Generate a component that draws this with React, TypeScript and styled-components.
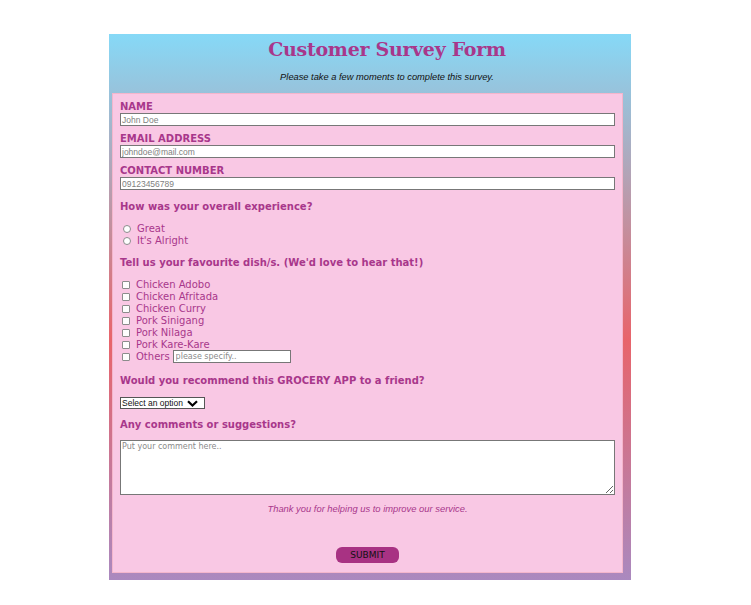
import React from "react";
import styled, { createGlobalStyle } from "styled-components";

const Global = createGlobalStyle`
  body { margin: 0; background: #ffffff; font-family: "DejaVu Sans", Verdana, sans-serif; }
  * { box-sizing: border-box; }
`;

const purple = "#a8378b";

const Outer = styled.div`
  margin: 34px 0 0 109px;
  width: 522px;
  padding: 3px 8px 7px 3px;
  background: linear-gradient(180deg, #86d9f7 0%, #9ac0d8 12%, #e8646b 56%, #aa89bf 100%);
`;

const Header = styled.header`
  padding-left: 39px;
  text-align: center;
`;

const Title = styled.h1`
  margin: 0;
  font-family: "DejaVu Serif", Georgia, serif;
  font-weight: bold;
  font-size: 19px;
  letter-spacing: -0.3px;
  line-height: 24px;
  color: ${purple};
`;

const Subtitle = styled.p`
  margin: 11px 0 10px;
  font-family: "Liberation Sans", Arial, sans-serif;
  font-style: italic;
  font-size: 9.3px;
  line-height: 11px;
  color: #111;
`;

const Panel = styled.form`
  background: #f9c8e4;
  border: 1px solid #f4b6cc;
  padding: 7px 7px 9px 7px;
  display: flex;
  flex-direction: column;
`;

const Field = styled.div<{ $gap?: number }>`
  display: flex;
  flex-direction: column;
  margin-bottom: ${(p) => p.$gap ?? 7}px;
`;

const Label = styled.label`
  font-weight: bold;
  font-size: 10px;
  line-height: 12px;
  color: ${purple};
  text-transform: uppercase;
`;

const TextInput = styled.input`
  height: 13px;
  width: 100%;
  border: 1px solid #777;
  background: #fff;
  padding: 0 1px;
  font-family: "Liberation Sans", Arial, sans-serif;
  font-size: 8.5px;
  outline: none;
  &::placeholder { color: #808080; }
`;

const Question = styled.p<{ $mt?: number; $mb?: number }>`
  margin: ${(p) => p.$mt ?? 10}px 0 ${(p) => p.$mb ?? 10}px;
  font-weight: bold;
  font-size: 10px;
  line-height: 12px;
  color: ${purple};
`;

const OptionList = styled.div`
  display: flex;
  flex-direction: column;
`;

const OptionRow = styled.label`
  display: flex;
  align-items: center;
  height: 12px;
  font-size: 10px;
  line-height: 12px;
  color: ${purple};
  padding-left: 3px;
`;

const Radio = styled.input.attrs({ type: "radio" })`
  appearance: none;
  width: 8px;
  height: 8px;
  margin: 0 6px 0 0;
  border: 1px solid #8c8c8c;
  border-radius: 50%;
  background: #fff;
`;

const Check = styled.input.attrs({ type: "checkbox" })`
  appearance: none;
  width: 8px;
  height: 8px;
  margin: 0 6px 0 -1px;
  border: 1px solid #8c8c8c;
  border-radius: 1px;
  background: #fdfdfd;
`;

const OtherRow = styled(OptionRow)`
  height: 13px;
  margin-top: -1px;
`;

const OtherInput = styled.input`
  margin-left: 3px;
  width: 118px;
  height: 13px;
  border: 1px solid #777;
  background: #fff;
  padding: 0 2px;
  font-family: "DejaVu Sans", Verdana, sans-serif;
  font-size: 8px;
  outline: none;
  &::placeholder { color: #8a8a8a; }
`;

const SelectBox = styled.div`
  display: inline-flex;
  align-items: center;
  align-self: flex-start;
  width: 85px;
  height: 12px;
  border: 1px solid #555;
  background: #fff;
  padding: 0 6px 0 1px;
`;

const Select = styled.select`
  appearance: none;
  border: none;
  background: transparent;
  padding: 0;
  margin: 0;
  flex: 1;
  height: 10px;
  font-family: "Liberation Sans", Arial, sans-serif;
  font-size: 8.5px;
  line-height: 10px;
  color: #111;
  outline: none;
`;

const Comments = styled.textarea`
  width: 100%;
  height: 55px;
  border: 1px solid #777;
  background: #fff;
  padding: 1px;
  font-family: "DejaVu Sans", Verdana, sans-serif;
  font-size: 8px;
  outline: none;
  display: block;
  &::placeholder { color: #8a8a8a; }
`;

const Thanks = styled.p`
  margin: 8px 0 0;
  text-align: center;
  font-family: "Liberation Sans", Arial, sans-serif;
  font-style: italic;
  font-size: 9.4px;
  line-height: 11px;
  color: ${purple};
`;

const Submit = styled.button`
  align-self: center;
  margin-top: 33px;
  width: 63px;
  height: 16px;
  border: none;
  border-radius: 6px;
  background: #a83283;
  color: #111;
  font-family: "DejaVu Sans", Verdana, sans-serif;
  font-size: 9px;
  line-height: 16px;
  padding: 0;
`;

const dishes = [
  "Chicken Adobo",
  "Chicken Afritada",
  "Chicken Curry",
  "Pork Sinigang",
  "Pork Nilaga",
  "Pork Kare-Kare",
];

export default function App() {
  return (
    <>
      <Global />
      <Outer>
        <Header>
          <Title>Customer Survey Form</Title>
          <Subtitle>Please take a few moments to complete this survey.</Subtitle>
        </Header>
        <Panel onSubmit={(e) => e.preventDefault()}>
          <Field>
            <Label htmlFor="name">Name</Label>
            <TextInput id="name" placeholder="John Doe" />
          </Field>
          <Field>
            <Label htmlFor="email">Email Address</Label>
            <TextInput id="email" placeholder="johndoe@mail.com" />
          </Field>
          <Field $gap={0}>
            <Label htmlFor="phone">Contact Number</Label>
            <TextInput id="phone" placeholder="09123456789" />
          </Field>

          <Question $mt={11}>How was your overall experience?</Question>
          <OptionList>
            <OptionRow>
              <Radio name="exp" />
              Great
            </OptionRow>
            <OptionRow>
              <Radio name="exp" />
              It's Alright
            </OptionRow>
          </OptionList>

          <Question>Tell us your favourite dish/s. (We'd love to hear that!)</Question>
          <OptionList>
            {dishes.map((d) => (
              <OptionRow key={d}>
                <Check />
                {d}
              </OptionRow>
            ))}
            <OtherRow>
              <Check />
              Others
              <OtherInput placeholder="please specify.." />
            </OtherRow>
          </OptionList>

          <Question $mt={12} $mb={10}>Would you recommend this GROCERY APP to a friend?</Question>
          <SelectBox>
            <Select defaultValue="">
              <option value="">Select an option</option>
              <option value="yes">Yes</option>
              <option value="no">No</option>
            </Select>
            <svg width="11" height="7" viewBox="0 0 11 7">
              <path d="M1 1.2 L5.5 5.5 L10 1.2" fill="none" stroke="#000" strokeWidth="2.2" />
            </svg>
          </SelectBox>

          <Question $mt={10} $mb={9}>Any comments or suggestions?</Question>
          <Comments placeholder="Put your comment here.." />

          <Thanks>Thank you for helping us to improve our service.</Thanks>
          <Submit type="submit">SUBMIT</Submit>
        </Panel>
      </Outer>
    </>
  );
}
